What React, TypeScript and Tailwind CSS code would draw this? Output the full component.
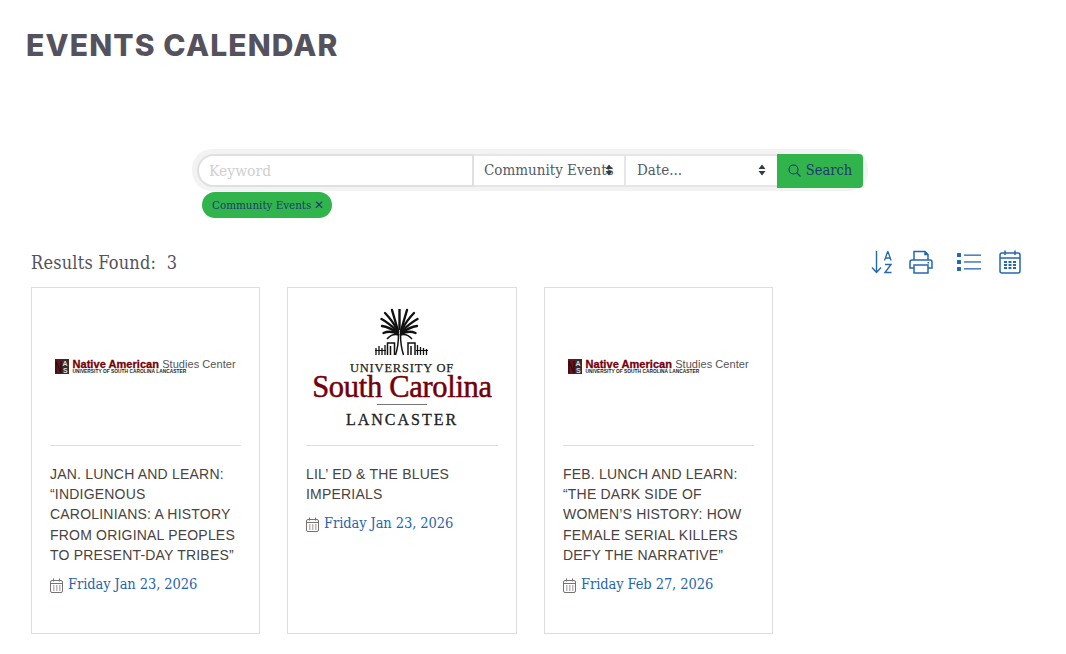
const serif = "font-['DejaVu_Serif_Condensed','DejaVu_Serif',serif]";

function SmallCalendar() {
  return (
    <svg width="13" height="15" viewBox="0 0 13 15" fill="none" stroke="#77716f" strokeWidth="1" className="shrink-0">
      <rect x="0.5" y="2.5" width="12" height="12" rx="1.5" />
      <path d="M0.5 5.5h12M3.5 0.5v3M9.5 0.5v3" />
      <path d="M3 8h1.5M6 8h1.5M9 8h1.5M3 10h1.5M6 10h1.5M9 10h1.5M3 12h1.5M6 12h1.5M9 12h1.5" strokeWidth="1.1" />
    </svg>
  );
}

function NasLogo() {
  return (
    <div className="flex items-center w-[182px] h-[17px] overflow-hidden">
      <svg width="14" height="15" viewBox="0 0 14 15" className="shrink-0">
        <rect width="14" height="15" fill="#3a2a2c" />
        <rect width="7" height="15" fill="#6d1017" />
        <path d="M1 14V2l5 12V2" stroke="#2b1012" strokeWidth="1.300" fill="none" />
        <text x="7.500" y="7" fontSize="7" fontWeight="700" fill="#ddd" fontFamily="Liberation Sans">A</text>
        <text x="8" y="14" fontSize="7" fontWeight="700" fill="#ddd" fontFamily="Liberation Sans">S</text>
      </svg>
      <div className="ml-[4px] flex flex-col whitespace-nowrap font-['Liberation_Sans',sans-serif] leading-none">
        <div className="text-[11px] leading-[10px] tracking-[0.05px]">
          <span className="font-bold text-[#73000a] [-webkit-text-stroke:0.3px_#73000a]">Native American</span>
          <span className="text-[#555] text-[11px]"> Studies Center</span>
        </div>
        <div className="text-[4.8px] leading-[5px] font-bold text-[#222] tracking-[0.04px]">UNIVERSITY OF SOUTH CAROLINA LANCASTER</div>
      </div>
    </div>
  );
}

function PalmMark() {
  const left = [
    "M400 330Q397 319 394 309",
    "M400 330Q394 319 387 312",
    "M400 331Q391 322 383.500 318",
    "M400 332Q391 326 384 325",
    "M400 333Q392 329 385.500 332",
  ];
  const right = [
    "M403 330Q406 319 409 309",
    "M403 330Q409 319 416 312",
    "M403 331Q412 322 419.500 318",
    "M403 332Q412 326 419 325",
    "M403 333Q411 329 417.500 332",
  ];
  return (
    <svg width="56" height="49" viewBox="376 307 56 49" fill="none" stroke="#111" className="block">
      <path d="M401.500 329V308" strokeWidth="2.400" />
      {left.concat(right).map((d) => (
        <path key={d} d={d} strokeWidth="2.400" strokeLinecap="round" />
      ))}
      <path d="M401 334Q394 332 389 338M402 334Q409 332 414 338" strokeWidth="1.500" />
      <path d="M400.500 333c0 8-1 15-3 21M402.500 333c0 8 1 15 3 21" strokeWidth="1.500" />
      <path d="M389.500 354V342h7v12M392.500 354V345M410 354V342h7v12M413 354V345" strokeWidth="1.500" />
      <path d="M378 354v-7M381 354v-9M384 354v-7M387 354v-10M419.500 354v-10M422.500 354v-8M425.500 354v-7M428.500 354v-6" strokeWidth="1.300" />
      <path d="M377 349.500h11M418 349.500h12" strokeWidth="1" />
    </svg>
  );
}

function UscLogo() {
  return (
    <div className="flex flex-col items-center whitespace-nowrap font-['Liberation_Serif',serif]">
      <PalmMark />
      <div className="text-[12.5px] leading-[12px] tracking-[0.8px] text-[#222] [-webkit-text-stroke:0.25px_#222] mt-[5px]">UNIVERSITY OF</div>
      <div className="text-[30.5px] leading-[26px] text-[#73000a] tracking-[-0.3px] [-webkit-text-stroke:0.5px_#73000a]">South Carolina</div>
      <div className="w-[50px] h-[1px] bg-[#777] mt-[4px]" />
      <div className="text-[16px] leading-[17px] tracking-[2px] text-[#222] [-webkit-text-stroke:0.3px_#222] mt-[6px]">LANCASTER</div>
    </div>
  );
}

type Ev = { logo: "nas" | "usc"; title: string; date: string };

const events: Ev[] = [
  { logo: "nas", title: "JAN. LUNCH AND LEARN: “INDIGENOUS CAROLINIANS: A HISTORY FROM ORIGINAL PEOPLES TO PRESENT-DAY TRIBES”", date: "Friday Jan 23, 2026" },
  { logo: "usc", title: "LIL’ ED & THE BLUES IMPERIALS", date: "Friday Jan 23, 2026" },
  { logo: "nas", title: "FEB. LUNCH AND LEARN: “THE DARK SIDE OF WOMEN’S HISTORY: HOW FEMALE SERIAL KILLERS DEFY THE NARRATIVE”", date: "Friday Feb 27, 2026" },
];

function Card({ ev }: { ev: Ev }) {
  return (
    <div className="border border-[#dedede] h-[347px] px-[18px] bg-white">
      <div className={`h-[158px] border-b border-[#dedede] flex justify-center ${ev.logo === "nas" ? "items-center" : "items-start pt-[20px]"}`}>
        {ev.logo === "nas" ? <div className="mb-[1px]"><NasLogo /></div> : <UscLogo />}
      </div>
      <h3 className="mt-[18px] text-[14px] leading-[20.2px] tracking-[0.2px] text-[#4a4341] font-['Liberation_Sans',sans-serif]">{ev.title}</h3>
      <div className="mt-[8px] flex items-center gap-[5px]">
        <span className="mt-[3px]"><SmallCalendar /></span>
        <span className={`${serif} text-[14.5px] leading-[22px] tracking-[-0.08px] text-[#1f65ad]`}>{ev.date}</span>
      </div>
    </div>
  );
}

function SelectArrows() {
  return (
    <svg width="8" height="12" viewBox="0 0 8 12" className="absolute right-[11px] top-[8px] pointer-events-none" fill="#343a40">
      <path d="M4 0.500 7.500 5H0.500zM4 11.500 0.500 7H7.500z" />
    </svg>
  );
}

export default function App() {
  return (
    <div className="w-[1066px] h-[654px] bg-white overflow-hidden relative">
      <h1 className="pl-[26px] pt-[27px] text-[30px] leading-[36px] font-extrabold text-[#54525c] tracking-[1.15px] font-['Inter',sans-serif]">EVENTS CALENDAR</h1>

      <div className="ml-[192px] mt-[86px] w-[676px]">
        <div className={`flex bg-[#f3f3f3] rounded-[20px] p-[5px] pb-[4px] h-[42px] ${serif}`}>
          <input readOnly placeholder="Keyword" className="w-[277px] h-[33px] bg-white border-2 border-[#e0e0e0] rounded-l-[17px] px-[10px] text-[15.5px] outline-none placeholder:text-[#cfcfcf]" />
          <div className="relative w-[152px] h-[33px] bg-white border-y-2 border-[#e6e6e6] border-r-2 overflow-hidden">
            <div className="pl-[10px] text-[15px] leading-[28px] text-[#555b66] whitespace-nowrap overflow-hidden w-[140px]">Community Events</div>
            <SelectArrows />
          </div>
          <div className="relative w-[151px] h-[33px] bg-white border-y-2 border-[#e6e6e6]">
            <div className="pl-[11px] text-[15px] leading-[28px] text-[#555b66]">Date...</div>
            <SelectArrows />
          </div>
          <button className="w-[86px] h-[34px] bg-[#32b44c] rounded-r-[4px] flex items-center justify-center gap-[5px] text-[14.5px] leading-[32px] pb-[2px] text-[#1d3a70]">
            <svg width="13" height="13" viewBox="0 0 13 13" fill="none" stroke="#1d3a70" strokeWidth="1.1" className="mt-[1px]"><circle cx="5.500" cy="5.500" r="4.500" /><path d="M9 9l3.500 3.500" /></svg>
            Search
          </button>
        </div>
        <div className="flex pl-[10px] mt-[1px]">
          <span className={`${serif} h-[26px] pl-[10px] pr-[8px] rounded-full bg-[#32b44c] text-[#1d3a70] text-[11.5px] leading-[26px] whitespace-nowrap flex`}>Community Events<span className="ml-[3px]">✕</span></span>
        </div>
      </div>

      <div className="flex items-center justify-between pl-[31px] pr-[45px] mt-[29px] h-[32px]">
        <div className={`${serif} text-[18px] text-[#55525a] tracking-[0.2px] whitespace-pre mb-[2px]`}>Results Found:  3</div>
        <div className="flex items-center text-[#2468b0] mb-[2px]">
          <svg width="22" height="24" viewBox="0 0 22 24" fill="none" stroke="currentColor" strokeWidth="1.4" className="mr-[16px]">
            <path d="M5.500 1v21M1 17.500l4.500 5 4.500-5" />
            <path d="M13.500 10.500l3-8.500h.6l3 8.500M14.500 8h5" strokeWidth="1.3" />
            <path d="M14 14.500h6l-6 8h6.500" strokeWidth="1.4" />
          </svg>
          <svg width="24" height="24" viewBox="0 0 24 24" fill="none" stroke="currentColor" strokeWidth="1.5" className="mr-[24px]">
            <path d="M5 10V1.500h11l3 3V10M16 1.500v3h3" />
            <path d="M5 18H1V12a2 2 0 0 1 2-2h18a2 2 0 0 1 2 2v6h-4" />
            <path d="M5 15h14v8H5z" />
            <path d="M18.500 12.800h1.500" />
          </svg>
          <svg width="24" height="20" viewBox="0 0 24 20" fill="currentColor" className="mr-[18px]">
            <rect x="0" y="1" width="4" height="4" rx="0.5" />
            <rect x="0" y="8" width="4" height="4" rx="0.5" />
            <rect x="0" y="15" width="4" height="4" rx="0.5" />
            <rect x="7" y="2.500" width="17" height="1.300" />
            <rect x="7" y="9.300" width="17" height="1.300" />
            <rect x="7" y="16.200" width="17" height="1.300" />
          </svg>
          <svg width="22" height="24" viewBox="0 0 22 24" fill="none" stroke="currentColor" strokeWidth="1.5">
            <rect x="1" y="3" width="20" height="20" rx="2" />
            <path d="M1 8h20M6 0.500V5M16 0.500V5" />
            <path d="M5 12h3M9.500 12h3M14 12h3M5 15h3M9.500 15h3M14 15h3M5 18h3M9.500 18h3M14 18h3" strokeWidth="1.800" />
          </svg>
        </div>
      </div>

      <div className="grid grid-cols-[229px_230px_229px] gap-x-[27px] ml-[31px] mt-[8px]">
        {events.map((ev) => (
          <Card key={ev.title} ev={ev} />
        ))}
      </div>
    </div>
  );
}
